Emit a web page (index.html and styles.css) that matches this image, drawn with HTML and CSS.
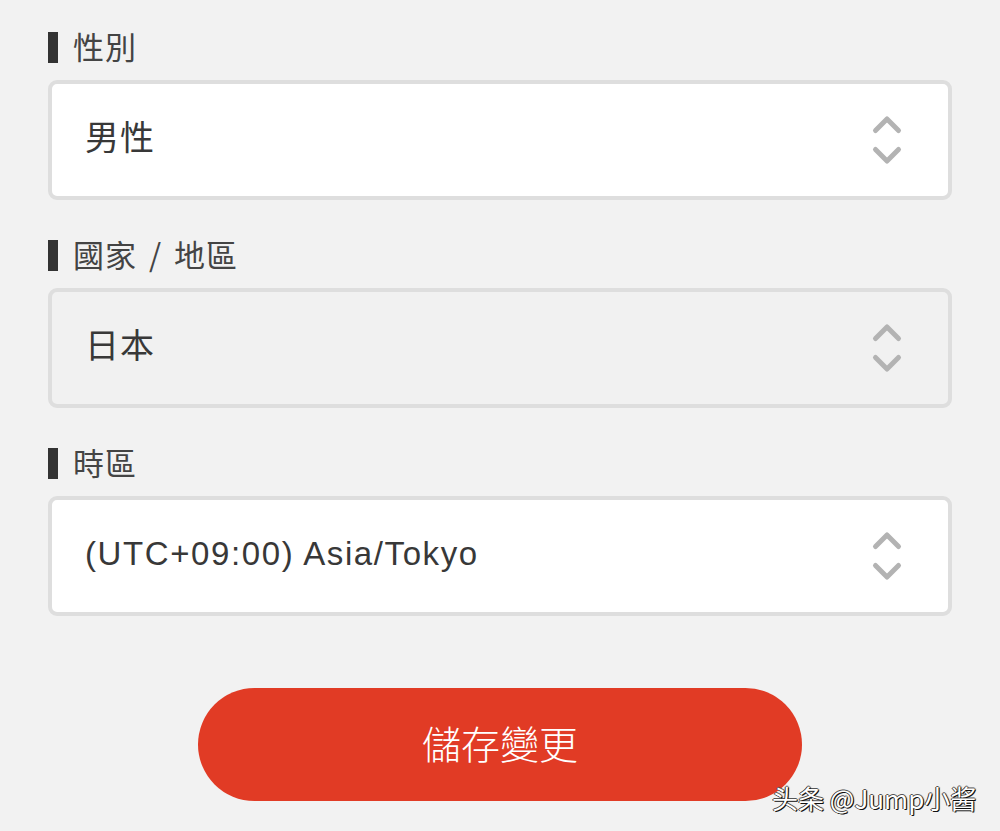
FILE: index.html
```html
<!DOCTYPE html>
<html lang="zh-Hant">
<head>
<meta charset="utf-8">
<title>設定</title>
<link rel="stylesheet" href="styles.css">
</head>
<body>
<main class="form">
  <div class="field">
    <div class="label"><span class="bar"></span><span>性別</span></div>
    <div class="select">
      <span class="value">男性</span>
      <svg class="chev" width="32" height="54" viewBox="0 0 32 54"><polyline points="4.5,17.5 16,6 27.5,17.5"/><polyline points="4.5,36.5 16,48 27.5,36.5"/></svg>
    </div>
  </div>
  <div class="field">
    <div class="label"><span class="bar"></span><span>國家 / 地區</span></div>
    <div class="select disabled">
      <span class="value">日本</span>
      <svg class="chev" width="32" height="54" viewBox="0 0 32 54"><polyline points="4.5,17.5 16,6 27.5,17.5"/><polyline points="4.5,36.5 16,48 27.5,36.5"/></svg>
    </div>
  </div>
  <div class="field">
    <div class="label"><span class="bar"></span><span>時區</span></div>
    <div class="select">
      <span class="value latin">(UTC+09:00) Asia/Tokyo</span>
      <svg class="chev" width="32" height="54" viewBox="0 0 32 54"><polyline points="4.5,17.5 16,6 27.5,17.5"/><polyline points="4.5,36.5 16,48 27.5,36.5"/></svg>
    </div>
  </div>
  <div class="actions">
    <button class="save" type="button">儲存變更</button>
  </div>
</main>
<div class="watermark">头条 @Jump小酱</div>
</body>
</html>
```
FILE: styles.css
```css
html, body {
  margin: 0;
  padding: 0;
}
body {
  background: #f2f2f2;
  width: 1000px;
  height: 831px;
  overflow: hidden;
  position: relative;
  font-family: "Liberation Sans", "Noto Sans CJK TC", sans-serif;
  color: #333;
}
.form {
  padding: 32px 48px 0 48px;
  display: flex;
  flex-direction: column;
}
.field {
  display: flex;
  flex-direction: column;
  gap: 17px;
  margin-bottom: 40px;
}
.label {
  display: flex;
  align-items: center;
  gap: 15px;
  height: 31px;
  font-size: 31px;
  color: #444;
  font-family: "Noto Sans CJK TC", sans-serif;
  letter-spacing: 1px;
  word-spacing: 4px;
}
.label span:last-child {
  margin-bottom: 4px;
}
.bar {
  width: 10px;
  height: 31px;
  background: #333;
}
.select {
  box-sizing: border-box;
  height: 120px;
  width: 904px;
  border: 4px solid #dedede;
  border-radius: 9px;
  background: #fff;
  display: flex;
  align-items: center;
  justify-content: space-between;
  padding: 0 45px 0 33px;
}
.select.disabled {
  background: #f1f1f1;
}
.value {
  font-family: "Noto Sans CJK TC", sans-serif;
  font-size: 34px;
  color: #383838;
  letter-spacing: 1px;
  margin-bottom: 10px;
}
.value.latin {
  font-family: "Liberation Sans", "Noto Sans CJK TC", sans-serif;
  font-size: 33px;
  letter-spacing: 1.6px;
  margin-bottom: 4px;
}
.chev {
  fill: none;
  stroke: #b3b3b3;
  stroke-width: 5;
  stroke-linecap: round;
  stroke-linejoin: round;
}
.actions {
  display: flex;
  justify-content: center;
  padding-top: 32px;
}
.save {
  width: 604px;
  height: 113px;
  border: none;
  border-radius: 57px;
  background: #e13b25;
  color: #fff;
  font-family: "Noto Sans CJK TC", sans-serif;
  font-size: 39px;
  font-weight: 300;
  letter-spacing: 0;
  padding: 0 0 6px 0;
}
.watermark {
  position: absolute;
  left: 772px;
  top: 779px;
  font-family: "Noto Sans CJK SC", sans-serif;
  font-size: 26px;
  color: #fff;
  white-space: nowrap;
  text-shadow: 1px 1px 0 #111, -1px 0 0 #333, 0 -1px 0 #555, 1px 0 1px #222;
}
```
